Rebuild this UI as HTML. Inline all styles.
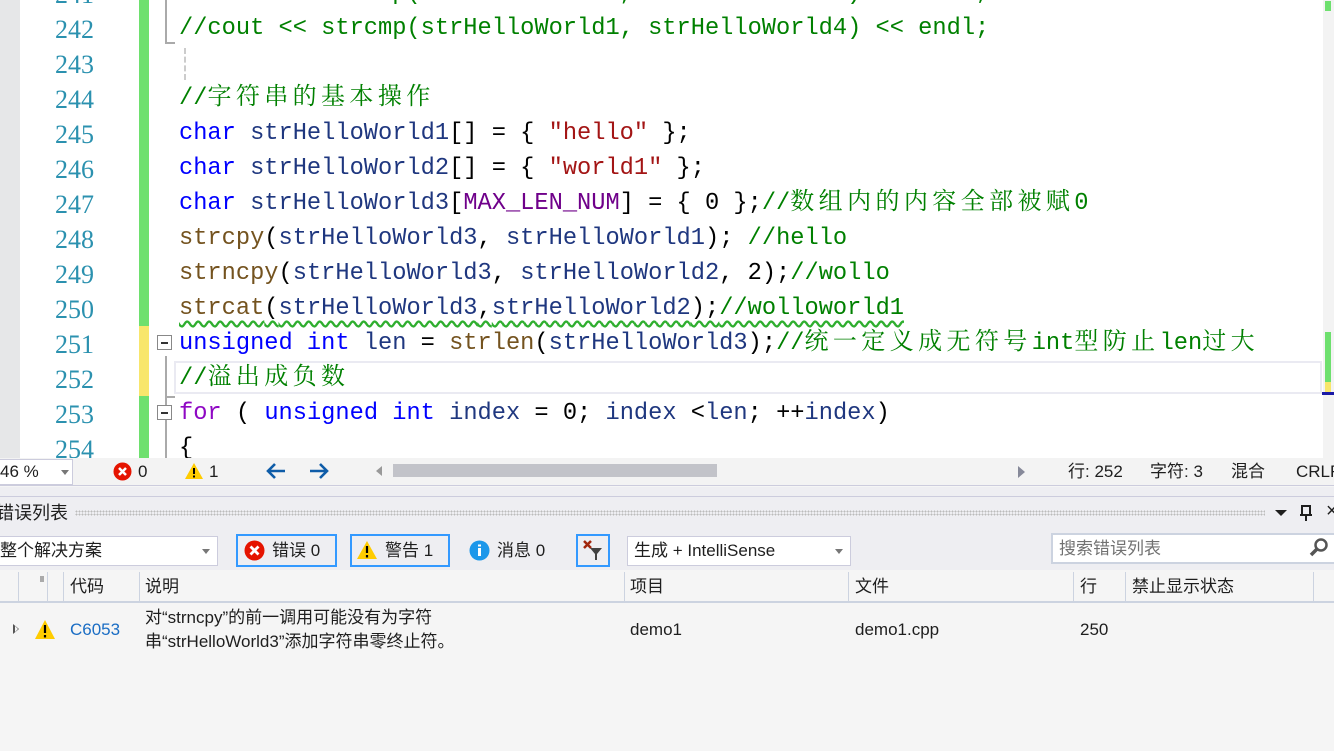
<!DOCTYPE html>
<html><head><meta charset="utf-8"><style>
*{margin:0;padding:0;box-sizing:border-box}
body{width:1334px;height:751px;overflow:hidden;background:#f5f5f5;position:relative;font-family:"Liberation Sans","Noto Sans CJK SC",sans-serif}
.abs{position:absolute}
#ed{left:0;top:0;width:1334px;height:458px;background:#fff;overflow:hidden}
.ln{position:absolute;left:20px;width:74px;text-align:right;font-family:"Liberation Serif","Noto Serif CJK SC",serif;font-size:26px;color:#2b91af;height:35px;line-height:37px}
.cl{position:absolute;left:179px;white-space:pre;font-family:"Liberation Mono","Noto Serif CJK SC",monospace;font-size:23.7px;height:35px;line-height:35px;color:#1f377f}
.c{font-family:"Noto Serif CJK SC","Noto Sans CJK SC",serif;font-size:24px;letter-spacing:4.4px;line-height:1px}
.k{color:#0000ff}.f{color:#74531f}.s{color:#a31515}.m{color:#008000}.p{color:#8f08c4}.o{color:#000}
.fold{position:absolute;left:157px;width:15px;height:15px;border:1px solid #888;background:#fff}
.fold:after{content:"";position:absolute;left:3px;top:6px;width:7px;height:1.5px;background:#333}
.t{font-size:17px;color:#1e1e1e;position:absolute;white-space:nowrap;line-height:20px}
.btn{position:absolute;top:534px;height:33px;border:2px solid #3399ff;background:#eeeef2}
</style></head><body>
<div id="ed" class="abs">
<div class="abs" style="left:0;top:0;width:20px;height:458px;background:#e6e7e8"></div>
<div class="abs" style="left:139px;top:0;width:10px;height:458px;background:#6ee06e"></div>
<div class="abs" style="left:139px;top:326px;width:10px;height:70px;background:#f8e66c"></div>
<div class="abs" style="left:165px;top:0;width:2px;height:44px;background:#aaa"></div>
<div class="abs" style="left:165px;top:42px;width:10px;height:2px;background:#aaa"></div>
<div class="abs" style="left:184px;top:48px;width:2px;height:32px;border-left:2px dashed #ccc"></div>
<div class="abs" style="left:165px;top:356px;width:2px;height:102px;background:#aaa"></div>
<div class="abs" style="left:165px;top:396px;width:10px;height:2px;background:#aaa"></div>
<div class="abs" style="left:174px;top:361px;width:1148px;height:33px;border:2px solid #eaeaf2"></div>
<div class="fold" style="top:335px"></div>
<div class="fold" style="top:405px"></div>

<div class="ln" style="top:-24px">241</div>
<div class="ln" style="top:11px">242</div>
<div class="ln" style="top:46px">243</div>
<div class="ln" style="top:81px">244</div>
<div class="ln" style="top:116px">245</div>
<div class="ln" style="top:151px">246</div>
<div class="ln" style="top:186px">247</div>
<div class="ln" style="top:221px">248</div>
<div class="ln" style="top:256px">249</div>
<div class="ln" style="top:291px">250</div>
<div class="ln" style="top:326px">251</div>
<div class="ln" style="top:361px">252</div>
<div class="ln" style="top:396px">253</div>
<div class="ln" style="top:431px">254</div>

<div class="cl m" style="top:-24px">//cout &lt;&lt; strcmp(strHelloWorld1, strHelloWorld3) &lt;&lt; endl;</div>
<div class="cl m" style="top:11px">//cout &lt;&lt; strcmp(strHelloWorld1, strHelloWorld4) &lt;&lt; endl;</div>
<div class="cl m" style="top:81px">//<span class="c">字符串的基本操作</span></div>
<div class="cl" style="top:116px"><span class="k">char</span> strHelloWorld1<span class="o">[] = { </span><span class="s">"hello"</span><span class="o"> };</span></div>
<div class="cl" style="top:151px"><span class="k">char</span> strHelloWorld2<span class="o">[] = { </span><span class="s">"world1"</span><span class="o"> };</span></div>
<div class="cl" style="top:186px"><span class="k">char</span> strHelloWorld3<span class="o">[</span><span style="color:#6f008a">MAX_LEN_NUM</span><span class="o">] = { 0 };</span><span class="m">//<span class="c">数组内的内容全部被赋</span>0</span></div>
<div class="cl" style="top:221px"><span class="f">strcpy</span><span class="o">(</span>strHelloWorld3<span class="o">, </span>strHelloWorld1<span class="o">); </span><span class="m">//hello</span></div>
<div class="cl" style="top:256px"><span class="f">strncpy</span><span class="o">(</span>strHelloWorld3<span class="o">, </span>strHelloWorld2<span class="o">, 2);</span><span class="m">//wollo</span></div>
<div class="cl" style="top:291px;text-decoration:underline wavy #2fae2f;text-underline-offset:6px"><span class="f">strcat</span><span class="o">(</span>strHelloWorld3<span class="o">,</span>strHelloWorld2<span class="o">);</span><span class="m">//wolloworld1</span></div>
<div class="cl" style="top:326px"><span class="k">unsigned int</span> len <span class="o">=</span> <span class="f">strlen</span><span class="o">(</span>strHelloWorld3<span class="o">);</span><span class="m">//<span class="c">统一定义成无符号</span>int<span class="c">型防止</span>len<span class="c">过大</span></span></div>
<div class="cl m" style="top:361px">//<span class="c">溢出成负数</span></div>
<div class="cl" style="top:396px"><span class="p">for</span><span class="o"> ( </span><span class="k">unsigned int</span> index <span class="o">= 0;</span> index <span class="o">&lt;</span>len<span class="o">; ++</span>index<span class="o">)</span></div>
<div class="cl o" style="top:431px">{</div>

<div class="abs" style="left:1323px;top:0;width:11px;height:458px;background:#f3f3f3"></div>
<div class="abs" style="left:1325px;top:1px;width:6px;height:10px;background:#6ee06e"></div>
<div class="abs" style="left:1325px;top:332px;width:6px;height:54px;background:#6ee06e"></div>
<div class="abs" style="left:1325px;top:382px;width:6px;height:10px;background:#f8e66c"></div>
<div class="abs" style="left:1322px;top:392px;width:12px;height:3px;background:#1a1aa6"></div>
</div>

<!-- status bar -->
<div class="abs" style="left:0;top:458px;width:1334px;height:28px;background:#f3f3f3;border-bottom:1px solid #ccd"></div>
<div class="abs" style="left:0;top:459px;width:73px;height:26px;background:#fff;border:1px solid #ccd;border-left:none"></div>
<div class="t" style="left:0;top:462px">46 %</div>
<div class="abs" style="left:61px;top:470px;border:4px solid transparent;border-top:5px solid #777"></div>
<svg class="abs" style="left:113px;top:462px" width="19" height="19"><circle cx="9.5" cy="9.5" r="9" fill="#e51400"/><path d="M6 6l7 7M13 6l-7 7" stroke="#fff" stroke-width="2.5"/></svg>
<div class="t" style="left:138px;top:462px">0</div>
<svg class="abs" style="left:184px;top:462px" width="20" height="18"><path d="M10 1L19 17H1Z" fill="#ffcc00"/><path d="M10 6v6M10 13.5v2" stroke="#000" stroke-width="2"/></svg>
<div class="t" style="left:209px;top:462px">1</div>
<svg class="abs" style="left:265px;top:462px" width="22" height="18"><path d="M20 9H3M10 2L3 9l7 7" fill="none" stroke="#0e5ca8" stroke-width="2.6"/></svg>
<svg class="abs" style="left:308px;top:462px" width="22" height="18"><path d="M2 9h17M12 2l7 7-7 7" fill="none" stroke="#0e5ca8" stroke-width="2.6"/></svg>
<div class="abs" style="left:376px;top:466px;border:5px solid transparent;border-right:6px solid #999;border-left:none"></div>
<div class="abs" style="left:393px;top:464px;width:324px;height:13px;background:#c2c3c9"></div>
<div class="abs" style="left:1018px;top:466px;border:6px solid transparent;border-left:7px solid #868999;border-right:none"></div>
<div class="t" style="left:1068px;top:462px">行: 252</div>
<div class="t" style="left:1150px;top:462px">字符: 3</div>
<div class="t" style="left:1231px;top:462px">混合</div>
<div class="t" style="left:1296px;top:462px">CRLF</div>

<!-- panel -->
<div class="abs" style="left:0;top:487px;width:1334px;height:83px;background:#eeeef2"></div>
<div class="abs" style="left:0;top:496px;width:1334px;height:1px;background:#ccd"></div>
<div class="t" style="left:-4px;top:503px;font-size:18px">错误列表</div>
<div class="abs" style="left:75px;top:510px;width:1190px;height:6px;background-image:radial-gradient(#bbb 0.8px,transparent 1px);background-size:3px 3px"></div>
<div class="abs" style="left:1275px;top:510px;border:6px solid transparent;border-top:6px solid #1e1e1e"></div>
<svg class="abs" style="left:1299px;top:504px" width="14" height="18"><path d="M3 2h8v9H3ZM1 11h12M7 11v6" fill="none" stroke="#1e1e1e" stroke-width="2"/></svg>
<div class="t" style="left:1326px;top:501px;font-size:20px">×</div>

<div class="abs" style="left:0;top:536px;width:218px;height:30px;background:#fff;border:1px solid #ccd;border-left:none"></div>
<div class="t" style="left:0;top:541px">整个解决方案</div>
<div class="abs" style="left:202px;top:549px;border:4px solid transparent;border-top:5px solid #777"></div>
<div class="btn" style="left:236px;width:101px"></div>
<svg class="abs" style="left:244px;top:540px" width="21" height="21"><circle cx="10.5" cy="10.5" r="10" fill="#e51400"/><path d="M6.5 6.5l8 8M14.5 6.5l-8 8" stroke="#fff" stroke-width="2.8"/></svg>
<div class="t" style="left:272px;top:541px">错误 0</div>
<div class="btn" style="left:350px;width:100px"></div>
<svg class="abs" style="left:356px;top:540px" width="22" height="20"><path d="M11 1L21 19H1Z" fill="#ffcc00"/><path d="M11 6v7M11 15v2.5" stroke="#000" stroke-width="2.2"/></svg>
<div class="t" style="left:385px;top:541px">警告 1</div>
<svg class="abs" style="left:469px;top:540px" width="21" height="21"><circle cx="10.5" cy="10.5" r="10" fill="#1c97ea"/><path d="M10.5 8v8M10.5 4.5v2" stroke="#fff" stroke-width="3"/></svg>
<div class="t" style="left:497px;top:541px">消息 0</div>
<div class="btn" style="left:576px;width:34px"></div>
<svg class="abs" style="left:582px;top:539px" width="24" height="22"><path d="M2 2l7 7M9 2l-7 7" stroke="#a1260d" stroke-width="2.5"/><path d="M8 9h12l-5 6v6h-2v-6Z" fill="#424242"/></svg>
<div class="abs" style="left:627px;top:536px;width:224px;height:30px;background:#fff;border:1px solid #ccd"></div>
<div class="t" style="left:634px;top:541px">生成 + IntelliSense</div>
<div class="abs" style="left:835px;top:549px;border:4px solid transparent;border-top:5px solid #777"></div>
<div class="abs" style="left:1051px;top:533px;width:283px;height:31px;background:#fff;border:2px solid #ccd3e0;border-right:none"></div>
<div class="t" style="left:1059px;top:539px;color:#717171">搜索错误列表</div>
<svg class="abs" style="left:1308px;top:537px" width="22" height="22"><circle cx="13" cy="8" r="5.5" fill="none" stroke="#555" stroke-width="2.5"/><path d="M9 12l-6 6" stroke="#555" stroke-width="3.5"/></svg>

<!-- table -->
<div class="abs" style="left:0;top:570px;width:1334px;height:33px;background:#f5f5f5;border-bottom:2px solid #ccd3e0"></div>
<div class="abs" style="left:18px;top:572px;width:1px;height:30px;background:#ccd3e0"></div>
<div class="abs" style="left:47px;top:572px;width:1px;height:30px;background:#ccd3e0"></div>
<div class="abs" style="left:40px;top:576px;width:4px;height:6px;background-image:radial-gradient(#777 0.7px,transparent 1px);background-size:2px 2px"></div>
<div class="abs" style="left:63px;top:572px;width:1px;height:30px;background:#ccd3e0"></div>
<div class="abs" style="left:139px;top:572px;width:1px;height:30px;background:#ccd3e0"></div>
<div class="abs" style="left:624px;top:572px;width:1px;height:30px;background:#ccd3e0"></div>
<div class="abs" style="left:848px;top:572px;width:1px;height:30px;background:#ccd3e0"></div>
<div class="abs" style="left:1073px;top:572px;width:1px;height:30px;background:#ccd3e0"></div>
<div class="abs" style="left:1125px;top:572px;width:1px;height:30px;background:#ccd3e0"></div>
<div class="abs" style="left:1313px;top:572px;width:1px;height:30px;background:#ccd3e0"></div>
<div class="t" style="left:70px;top:577px">代码</div>
<div class="t" style="left:145px;top:577px">说明</div>
<div class="t" style="left:630px;top:577px">项目</div>
<div class="t" style="left:855px;top:577px">文件</div>
<div class="t" style="left:1080px;top:577px">行</div>
<div class="t" style="left:1132px;top:577px">禁止显示状态</div>

<div class="abs" style="left:13px;top:624px;border:5px solid transparent;border-left:6px solid #555;border-right:none"></div>
<div class="abs" style="left:15px;top:626px;border:3px solid transparent;border-left:3px solid #f5f5f5;border-right:none"></div>
<svg class="abs" style="left:34px;top:619px" width="22" height="21"><path d="M11 1L21 20H1Z" fill="#ffcc00"/><path d="M11 6v8M11 16v2.5" stroke="#000" stroke-width="2.2"/></svg>
<div class="t" style="left:70px;top:620px;color:#1a6dc4">C6053</div>
<div class="t" style="left:145px;top:608px">对“strncpy”的前一调用可能没有为字符</div>
<div class="t" style="left:145px;top:632px">串“strHelloWorld3”添加字符串零终止符。</div>
<div class="t" style="left:630px;top:620px">demo1</div>
<div class="t" style="left:855px;top:620px">demo1.cpp</div>
<div class="t" style="left:1080px;top:620px">250</div>
</body></html>
